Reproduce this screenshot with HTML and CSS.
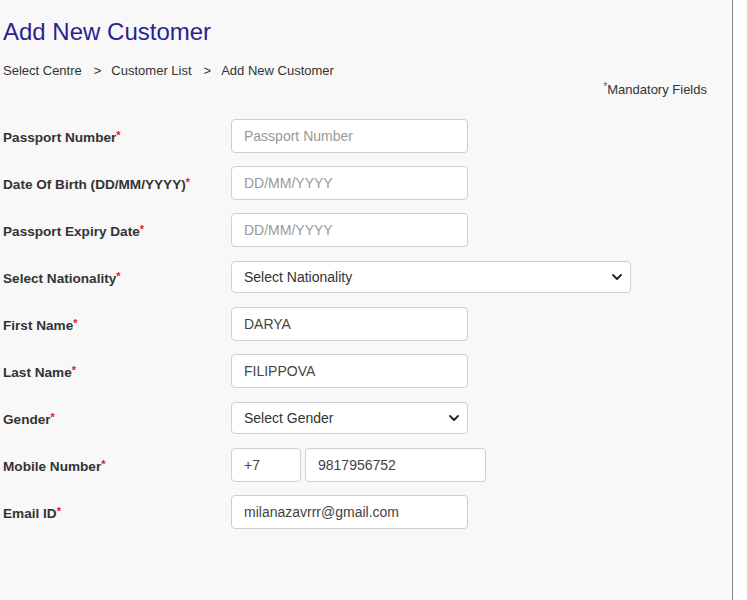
FILE: index.html
```html
<!DOCTYPE html>
<html>
<head>
<meta charset="utf-8">
<link rel="stylesheet" href="styles.css">
</head>
<body>
<div class="page">
  <h1 class="title">Add New Customer</h1>
  <div class="crumbs">
    <span>Select Centre</span><span class="sep">&gt;</span><span>Customer List</span><span class="sep">&gt;</span><span>Add New Customer</span>
  </div>
  <div class="mandatory"><span class="req">*</span>Mandatory Fields</div>
  <form class="form">
    <div class="row">
      <label class="label">Passport Number<span class="req">*</span></label>
      <input class="field" type="text" placeholder="Passport Number">
    </div>
    <div class="row">
      <label class="label">Date Of Birth (DD/MM/YYYY)<span class="req">*</span></label>
      <input class="field" type="text" placeholder="DD/MM/YYYY">
    </div>
    <div class="row">
      <label class="label">Passport Expiry Date<span class="req">*</span></label>
      <input class="field" type="text" placeholder="DD/MM/YYYY">
    </div>
    <div class="row">
      <label class="label">Select Nationality<span class="req">*</span></label>
      <div class="field select wide"><span>Select Nationality</span><svg class="chev" viewBox="0 0 10 6" width="10" height="6"><path d="M1 1 L5 5 L9 1" fill="none" stroke="#222" stroke-width="1.8" stroke-linecap="round" stroke-linejoin="round"/></svg></div>
    </div>
    <div class="row">
      <label class="label">First Name<span class="req">*</span></label>
      <input class="field" type="text" value="DARYA">
    </div>
    <div class="row">
      <label class="label">Last Name<span class="req">*</span></label>
      <input class="field" type="text" value="FILIPPOVA">
    </div>
    <div class="row">
      <label class="label">Gender<span class="req">*</span></label>
      <div class="field select"><span>Select Gender</span><svg class="chev" viewBox="0 0 10 6" width="10" height="6"><path d="M1 1 L5 5 L9 1" fill="none" stroke="#222" stroke-width="1.8" stroke-linecap="round" stroke-linejoin="round"/></svg></div>
    </div>
    <div class="row">
      <label class="label">Mobile Number<span class="req">*</span></label>
      <div class="phone">
        <input class="field code" type="text" value="+7">
        <input class="field num" type="text" value="9817956752">
      </div>
    </div>
    <div class="row">
      <label class="label">Email ID<span class="req">*</span></label>
      <input class="field" type="text" value="milanazavrrr@gmail.com">
    </div>
  </form>
</div>
</body>
</html>
```
FILE: styles.css
```css
html, body {
  margin: 0;
  padding: 0;
  background: #fdfdfd;
  font-family: "Liberation Sans", Arial, sans-serif;
}
.page {
  width: 733px;
  min-height: 600px;
  box-sizing: border-box;
  background: #f8f8f8;
  border-right: 1px solid #8c8490;
  padding: 17px 0 0 3px;
}
.title {
  margin: 0;
  font-size: 24px;
  font-weight: normal;
  color: #2d1f8f;
  line-height: 29px;
}
.crumbs {
  margin-top: 17px;
  font-size: 13px;
  color: #333;
  line-height: 16px;
  display: flex;
}
.sep {
  margin: 0 10px 0 12px;
}
.mandatory {
  text-align: right;
  padding-right: 25px;
  font-size: 13px;
  color: #333;
  line-height: 16px;
  margin-top: 3px;
}
.mandatory .req {
  vertical-align: 4px;
  font-size: 10px;
  line-height: 0;
}
.req {
  color: #e8101c;
  font-size: 11px;
  vertical-align: 3px;
  line-height: 0;
}
.form {
  margin-top: 21px;
  display: flex;
  flex-direction: column;
  gap: 13px;
}
.row {
  display: flex;
  align-items: center;
  height: 34px;
}
.label {
  width: 228px;
  flex: none;
  font-size: 13.6px;
  font-weight: bold;
  color: #333;
  padding-top: 2px;
}
.field {
  box-sizing: border-box;
  width: 237px;
  height: 34px;
  border: 1px solid #cfcfcf;
  border-radius: 4px;
  background: #fff;
  padding: 0 12px;
  font-family: "Liberation Sans", Arial, sans-serif;
  font-size: 14px;
  color: #444;
  outline: none;
  margin: 0;
}
.field::placeholder {
  color: #999;
}
.select {
  display: flex;
  align-items: center;
  justify-content: space-between;
  height: 32px;
  padding-right: 8px;
  color: #333;
}
.wide {
  width: 400px;
}
.chev {
  display: block;
}
.phone {
  display: flex;
  gap: 4px;
}
.code {
  width: 70px;
}
.num {
  width: 181px;
}
```
